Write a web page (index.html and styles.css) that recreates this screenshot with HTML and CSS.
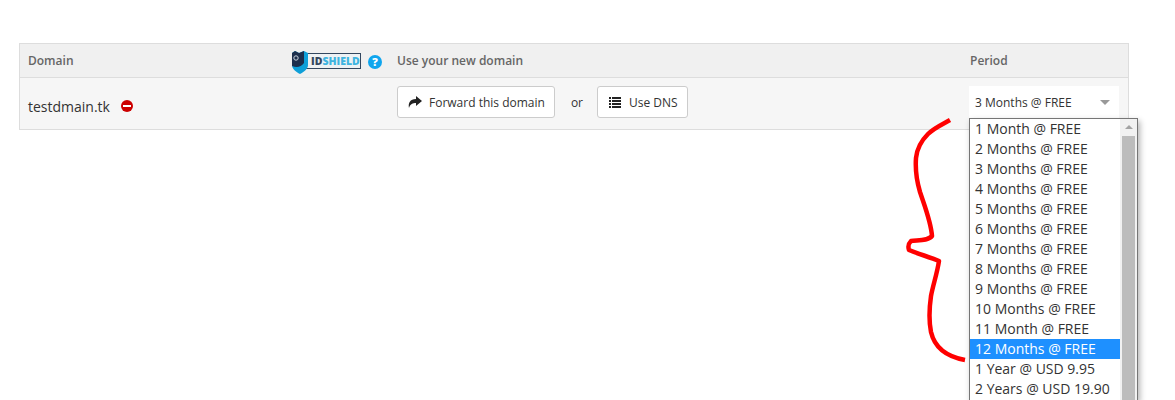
FILE: index.html
```html
<!DOCTYPE html>
<html>

<head>
    <title>Domain Configuration</title>
    <link rel="stylesheet" href="styles.css">
</head>

<body>
    <div class="domain-table">
        <div class="table-head">
            <div class="head-cell head-domain">
                <span>Domain</span>
                <span class="shield-group">
                    <svg class="shield-logo" width="70" height="24" viewBox="0 0 70 24">
                        <rect x="13.5" y="3.5" width="56" height="15" fill="#eef2f4" stroke="#33475f"/>
                        <path d="M1 3 L4 1 L8 3 L13 1 L17 3 V15 C17 19 13 22 9 24 C5 22 1 19 1 15 Z" fill="#0e9fd8"/>
                        <path d="M1 3 L4 1 L8 3 L13 1 L13 13 C10 17 6 18 1 16 Z" fill="#1d2f4d"/>
                        <circle cx="5" cy="8" r="2.2" fill="none" stroke="#c9d3dc"/>
                        <text x="20" y="15" class="logo-text"><tspan class="logo-id">ID</tspan><tspan class="logo-shield">SHIELD</tspan></text>
                    </svg>
                    <span class="help-icon">?</span>
                </span>
            </div>
            <div class="head-cell">Use your new domain</div>
            <div class="head-cell head-period">Period</div>
        </div>
        <div class="table-row">
            <div class="row-cell row-domain">
                <span class="domain-name">testdmain.tk</span>
                <span class="remove-icon"></span>
            </div>
            <div class="row-cell">
                <a class="btn">
                    <svg width="14" height="12" viewBox="0 0 14 12"><path d="M8 0 L14 5 L8 10 V7 C5 7 2 8 1 12 C0 7 2 3 8 3 Z" fill="#222"/></svg>
                    Forward this domain
                </a>
                <span class="or-label">or</span>
                <a class="btn">
                    <svg width="14" height="12" viewBox="0 0 14 12"><path d="M1 1h2v2H1zM4 1h9v2H4zM1 4h2v2H1zM4 4h9v2H4zM1 7h2v2H1zM4 7h9v2H4zM1 10h2v2H1zM4 10h9v2H4z" fill="#222"/></svg>
                    Use DNS
                </a>
            </div>
            <div class="row-cell">
                <div class="period-select">
                    <span>3 Months @ FREE</span>
                    <span class="select-arrow"></span>
                </div>
            </div>
        </div>
    </div>

    <svg class="brace" width="70" height="250" viewBox="900 115 70 250">
        <path d="M950 120 C941 125 934 128 928 134 C921 141 917 148 916 158 C915 172 917 182 920 192 C925 207 931 222 932 236 C928 241 918 240 911 241 C908 244 908 247 909 250 C918 254 930 257 939 261 C937 274 933 285 931 296 C929 310 929 322 931 332 C934 345 943 356 965 360" fill="none" stroke="#f00" stroke-width="4.5" stroke-linejoin="round"/>
    </svg>

    <div class="period-list">
        <ul class="period-options">
            <li>1 Month @ FREE</li>
            <li>2 Months @ FREE</li>
            <li>3 Months @ FREE</li>
            <li>4 Months @ FREE</li>
            <li>5 Months @ FREE</li>
            <li>6 Months @ FREE</li>
            <li>7 Months @ FREE</li>
            <li>8 Months @ FREE</li>
            <li>9 Months @ FREE</li>
            <li>10 Months @ FREE</li>
            <li>11 Month @ FREE</li>
            <li class="selected">12 Months @ FREE</li>
            <li>1 Year @ USD 9.95</li>
            <li>2 Years @ USD 19.90</li>
        </ul>
        <div class="scroll-track">
            <span class="scroll-up"></span>
            <span class="scroll-thumb"></span>
        </div>
    </div>
</body>

</html>
```

FILE: styles.css
```css
html,
body {
    height: 400px;
    overflow: hidden;
}

body {
    font-family: "Open Sans", Arial, sans-serif;
    margin: 0;
    padding: 43px 46px 0 19px;
    box-sizing: border-box;
    background-color: #fff;
    color: #333;
}

/* Table */
.domain-table {
    border: 1px solid #ddd;
}

.table-head,
.table-row {
    display: grid;
    grid-template-columns: 369px 572px 1fr;
}

.table-head {
    height: 33px;
    background-color: #f0f0f0;
    border-bottom: 1px solid #ddd;
    font-size: 12px;
    font-weight: 600;
    color: #666;
}

.table-row {
    height: 51px;
    background-color: #f6f6f6;
}

.head-cell,
.row-cell {
    display: flex;
    align-items: center;
    padding-left: 8px;
}

.row-cell {
    padding-bottom: 3px;
}

.row-domain {
    padding-top: 5px;
    padding-bottom: 0;
}

.head-domain {
    justify-content: space-between;
    padding-right: 7px;
}

.head-period {
    padding-left: 9px;
}

.shield-group {
    display: flex;
    align-items: center;
    gap: 7px;
    margin-top: 2px;
}

.shield-logo {
    display: block;
}

.logo-text {
    font-family: "Open Sans", Arial, sans-serif;
    font-size: 10.5px;
    font-weight: 800;
}

.logo-id {
    fill: #33475f;
}

.logo-shield {
    fill: #3fb4e0;
}

.help-icon {
    width: 14px;
    height: 14px;
    border-radius: 50%;
    background-color: #0fa5ee;
    color: #fff;
    font-size: 11px;
    font-weight: 800;
    line-height: 14px;
    text-align: center;
}

/* Row */
.domain-name {
    font-size: 14px;
    color: #333;
}

.remove-icon {
    position: relative;
    width: 12px;
    height: 12px;
    margin-left: 11px;
    border-radius: 50%;
    background-color: #c00;
}

.remove-icon::after {
    content: "";
    position: absolute;
    left: 2px;
    top: 5px;
    width: 8px;
    height: 2px;
    background-color: #fff;
}

.btn {
    display: flex;
    align-items: center;
    gap: 7px;
    height: 30px;
    padding: 0 9px 0 10px;
    background-color: #fff;
    border: 1px solid #ccc;
    border-radius: 3px;
    font-size: 12px;
    color: #333;
}

.or-label {
    margin: 0 14px 0 16px;
    font-size: 12px;
}

.period-select {
    display: flex;
    justify-content: space-between;
    align-items: center;
    width: 150px;
    height: 32px;
    padding: 0 6px;
    box-sizing: border-box;
    background-color: #fff;
    font-size: 12px;
}

.select-arrow {
    width: 0;
    height: 0;
    margin-right: 3px;
    border-left: 5px solid transparent;
    border-right: 5px solid transparent;
    border-top: 5px solid #999;
}

/* Annotation */
.brace {
    position: absolute;
    left: 900px;
    top: 115px;
}

/* Open dropdown */
.period-list {
    position: absolute;
    left: 969px;
    top: 118px;
    width: 167px;
    height: 281px;
    display: flex;
    background-color: #fff;
    border: 1px solid #767676;
    border-bottom: 0;
    box-shadow: 2px 3px 6px rgba(0, 0, 0, 0.3);
}

.period-options {
    flex: 1;
    margin: 0;
    padding: 0;
    list-style: none;
    font-size: 14px;
    line-height: 20px;
}

.period-options li {
    padding-left: 5px;
}

.period-options .selected {
    background-color: #1e90ff;
    color: #fff;
}

.scroll-track {
    display: flex;
    flex-direction: column;
    align-items: center;
    width: 17px;
    background-color: #f1f1f1;
}

.scroll-up {
    width: 0;
    height: 0;
    margin: 6px 0 7px;
    border-left: 4px solid transparent;
    border-right: 4px solid transparent;
    border-bottom: 4px solid #a3a3a3;
}

.scroll-thumb {
    flex: 1;
    width: 13px;
    background-color: #bcbcbc;
}
```
